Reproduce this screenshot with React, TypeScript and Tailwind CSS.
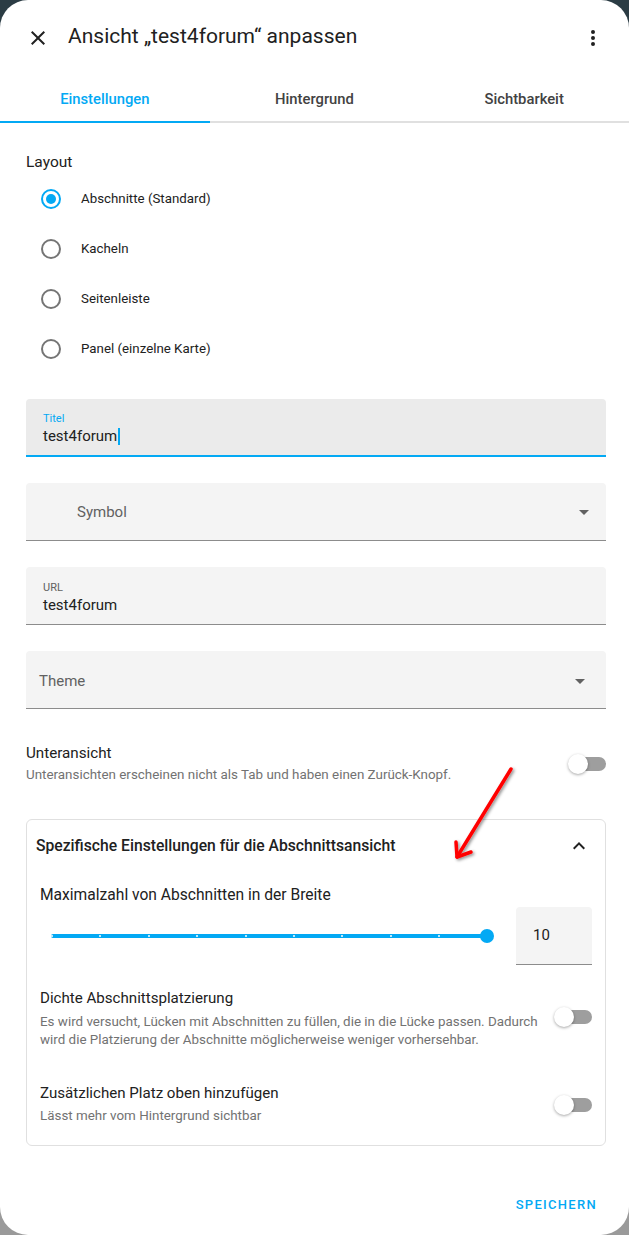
import React from "react";

function Radio({ checked, label }: { checked?: boolean; label: string }) {
  return (
    <div className="flex h-[50px] items-center">
      <div className="ml-[15px] mr-[20px] flex h-[20px] w-[20px] items-center justify-center">
        <div
          className={
            checked
              ? "flex h-[20px] w-[20px] items-center justify-center rounded-full border-2 border-[#03a9f4]"
              : "h-[20px] w-[20px] rounded-full border-2 border-[#757575]"
          }
        >
          {checked && <div className="h-[10px] w-[10px] rounded-full bg-[#03a9f4]" />}
        </div>
      </div>
      <span className="text-[13.3px] text-[#212121]">{label}</span>
    </div>
  );
}

function Toggle() {
  return (
    <div className="relative h-[20px] w-[38px] shrink-0">
      <div className="absolute left-[4px] top-[3px] h-[14px] w-[34px] rounded-full bg-[#9e9e9e]" />
      <div className="absolute left-0 top-0 h-[20px] w-[20px] rounded-full bg-white shadow-[0_1px_3px_rgba(0,0,0,0.35)]" />
    </div>
  );
}

function Caret() {
  return (
    <svg width="10" height="5" viewBox="0 0 10 5">
      <path d="M0 0 L10 0 L5 5 Z" fill="#616161" />
    </svg>
  );
}

export default function App() {
  const ticks = [0, 1, 2, 3, 4, 5, 6, 7, 8];
  return (
    <div
      className="relative h-[1235px] w-[629px] overflow-hidden bg-[linear-gradient(to_bottom,#2b3c44_0px,#2b3c44_80px,#8e8e86_400px,#9a9a9a_1000px,#9a9a9a_100%)]"
      style={{ fontFamily: "Roboto, 'Noto Sans', sans-serif" }}
    >
      <div className="flex h-full w-full flex-col rounded-[28px] bg-white">
        {/* Header */}
        <div className="flex h-[75px] items-center">
          <div className="flex w-[68px] justify-center pl-[8px]">
            <svg width="24" height="24" viewBox="0 0 24 24">
              <path
                d="M19 6.41L17.59 5 12 10.59 6.41 5 5 6.41 10.59 12 5 17.59 6.41 19 12 13.41 17.59 19 19 17.59 13.41 12z"
                fill="#212121"
              />
            </svg>
          </div>
          <h1 className="mb-[2px] flex-1 text-[21px] font-normal text-[#212121]">
            Ansicht „test4forum“ anpassen
          </h1>
          <div className="flex w-[72px] justify-center">
            <svg width="24" height="24" viewBox="0 0 24 24">
              <path
                d="M12 16a2 2 0 0 1 2 2 2 2 0 0 1-2 2 2 2 0 0 1-2-2 2 2 0 0 1 2-2m0-6a2 2 0 0 1 2 2 2 2 0 0 1-2 2 2 2 0 0 1-2-2 2 2 0 0 1 2-2m0-6a2 2 0 0 1 2 2 2 2 0 0 1-2 2 2 2 0 0 1-2-2 2 2 0 0 1 2-2z"
                fill="#212121"
              />
            </svg>
          </div>
        </div>

        {/* Tabs */}
        <div className="grid h-[48px] grid-cols-3 border-b-2 border-[#e0e0e0]">
          <div className="relative flex items-center justify-center pt-[2px] text-[14.8px] font-medium text-[#03a9f4]">
            Einstellungen
            <div className="absolute bottom-[-2px] left-0 right-0 h-[2px] bg-[#03a9f4]" />
          </div>
          <div className="flex items-center justify-center pt-[2px] text-[14.8px] font-medium text-[#424242]">
            Hintergrund
          </div>
          <div className="flex items-center justify-center pt-[2px] text-[14.8px] font-medium text-[#424242]">
            Sichtbarkeit
          </div>
        </div>

        {/* Content */}
        <div className="flex flex-col pl-[26px] pr-[23px]">
          <div className="pt-[28px] text-[15.5px] leading-[22px] text-[#212121]">Layout</div>
          <div className="mt-[1px] flex flex-col">
            <Radio checked label="Abschnitte (Standard)" />
            <Radio label="Kacheln" />
            <Radio label="Seitenleiste" />
            <Radio label="Panel (einzelne Karte)" />
          </div>

          <div className="mt-[25px] flex flex-col gap-[26px]">
            <div className="flex h-[58px] flex-col rounded-t-[4px] border-b-2 border-[#03a9f4] bg-[#ebebeb] px-[17px] pt-[13px]">
              <span className="text-[11px] leading-[14px] text-[#03a9f4]">Titel</span>
              <span className="flex items-center text-[15px] leading-[20px] text-[#212121]">
                test4forum
                <span className="ml-[1px] inline-block h-[17px] w-[1.5px] bg-[#03a9f4]" />
              </span>
            </div>
            <div className="flex h-[58px] items-center rounded-t-[4px] border-b border-[#8c8c8c] bg-[#f4f4f4] pl-[51px] pr-[17px] pt-[2px]">
              <span className="flex-1 text-[15px] text-[#616161]">Symbol</span>
              <Caret />
            </div>
            <div className="flex h-[58px] flex-col rounded-t-[4px] border-b border-[#8c8c8c] bg-[#f4f4f4] px-[17px] pt-[14px]">
              <span className="text-[11px] leading-[14px] text-[#616161]">URL</span>
              <span className="text-[15px] leading-[20px] text-[#212121]">test4forum</span>
            </div>
            <div className="flex h-[58px] items-center rounded-t-[4px] border-b border-[#8c8c8c] bg-[#f4f4f4] pl-[13px] pr-[21px] pt-[3px]">
              <span className="flex-1 text-[15px] text-[#616161]">Theme</span>
              <Caret />
            </div>
          </div>

          {/* Unteransicht */}
          <div className="mt-[33px] flex items-center">
            <div className="flex flex-1 flex-col">
              <span className="text-[15.2px] leading-[22px] text-[#212121]">Unteransicht</span>
              <span className="text-[13.4px] leading-[22px] text-[#727272]">
                Unteransichten erscheinen nicht als Tab und haben einen Zurück-Knopf.
              </span>
            </div>
            <Toggle />
          </div>

          {/* Expansion panel */}
          <div className="mt-[33px] flex flex-col rounded-[6px] border border-[#e0e0e0] pb-[18px]">
            <div className="flex h-[52px] items-center pl-[9px] pr-[14px]">
              <span className="flex-1 text-[15.7px] font-medium text-[#212121]">
                Spezifische Einstellungen für die Abschnittsansicht
              </span>
              <svg width="24" height="24" viewBox="0 0 24 24">
                <path d="M7.41 15.41L12 10.83l4.59 4.58L18 14l-6-6-6 6z" fill="#212121" />
              </svg>
            </div>
            <div className="flex flex-col px-[13px]">
              <span className="mt-[12px] text-[15.6px] leading-[22px] text-[#212121]">
                Maximalzahl von Abschnitten in der Breite
              </span>
              <div className="mt-[1px] flex items-center">
                <div className="relative ml-[11px] h-[14px] w-[443px]">
                  <div className="absolute left-0 top-[5px] h-[4px] w-[436px] rounded-full bg-[#03a9f4]" />
                  {ticks.map((i) => (
                    <div
                      key={i}
                      className="absolute top-[6px] h-[2px] w-[2px] rounded-full bg-white"
                      style={{ left: `${i * 48.4}px` }}
                    />
                  ))}
                  <div className="absolute left-[429px] top-0 h-[14px] w-[14px] rounded-full bg-[#03a9f4]" />
                </div>
                <div className="ml-[22px] flex h-[58px] w-[76px] items-center rounded-t-[4px] border-b border-[#8c8c8c] bg-[#f4f4f4] pl-[17px] text-[15px] text-[#212121]">
                  10
                </div>
              </div>

              <div className="mt-[22px] flex items-center">
                <div className="flex flex-1 flex-col">
                  <span className="text-[15.1px] leading-[22px] text-[#212121]">
                    Dichte Abschnittsplatzierung
                  </span>
                  <span className="mt-[4px] text-[13.4px] leading-[18px] text-[#727272]">
                    Es wird versucht, Lücken mit Abschnitten zu füllen, die in die Lücke passen. Dadurch wird die Platzierung der Abschnitte möglicherweise weniger vorhersehbar.
                  </span>
                </div>
                <div className="mb-[3px] ml-[12px]">
                  <Toggle />
                </div>
              </div>

              <div className="mt-[33px] flex items-center">
                <div className="flex flex-1 flex-col">
                  <span className="text-[15.1px] leading-[22px] text-[#212121]">
                    Zusätzlichen Platz oben hinzufügen
                  </span>
                  <span className="mt-[1px] text-[13.4px] leading-[22px] text-[#727272]">
                    Lässt mehr vom Hintergrund sichtbar
                  </span>
                </div>
                <Toggle />
              </div>
            </div>
          </div>

          <div className="mt-[51px] flex justify-end pr-[9px]">
            <span className="text-[13px] font-medium leading-[16px] tracking-[1.3px] text-[#03a9f4]">
              SPEICHERN
            </span>
          </div>
        </div>
      </div>

      {/* Red annotation arrow */}
      <svg
        className="pointer-events-none absolute left-0 top-0"
        width="629"
        height="1235"
        viewBox="0 0 629 1235"
      >
        <defs>
          <filter id="sh" x="-20%" y="-20%" width="140%" height="140%">
            <feDropShadow dx="1.5" dy="1.5" stdDeviation="1.5" floodColor="#000" floodOpacity="0.45" />
          </filter>
        </defs>
        <g filter="url(#sh)" stroke="#ff0000" strokeWidth="3.5" strokeLinecap="round" strokeLinejoin="round" fill="none">
          <path d="M511 769 L457 857" />
          <path d="M456 842 L457 857 L471 852" />
        </g>
      </svg>
    </div>
  );
}
